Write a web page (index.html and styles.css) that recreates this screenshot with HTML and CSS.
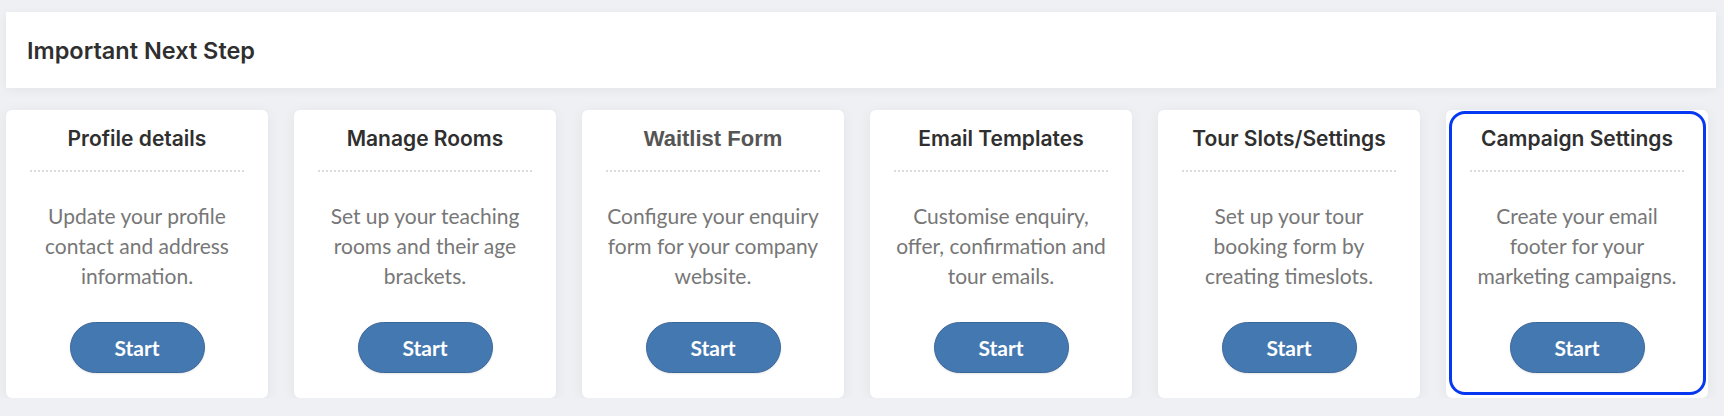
FILE: index.html
```html
<!DOCTYPE html>
<html lang="en">
<head>
  <meta charset="UTF-8" />
  <title>Important Next Step</title>
  <link rel="stylesheet" href="styles.css">
</head>
<body>
  <div class="page">
    <div class="next-step-header">
      <h2>Important Next Step</h2>
    </div>

    <div class="step-row">
      <div class="step-card">
        <h3 class="step-title">Profile details</h3>
        <p class="step-text">Update your profile contact and address information.</p>
        <button class="start-btn">Start</button>
      </div>

      <div class="step-card">
        <h3 class="step-title">Manage Rooms</h3>
        <p class="step-text">Set up your teaching rooms and their age brackets.</p>
        <button class="start-btn">Start</button>
      </div>

      <div class="step-card">
        <h3 class="step-title alt">Waitlist Form</h3>
        <p class="step-text">Configure your enquiry form for your company website.</p>
        <button class="start-btn">Start</button>
      </div>

      <div class="step-card">
        <h3 class="step-title">Email Templates</h3>
        <p class="step-text">Customise enquiry, offer, confirmation and tour emails.</p>
        <button class="start-btn">Start</button>
      </div>

      <div class="step-card">
        <h3 class="step-title">Tour Slots/Settings</h3>
        <p class="step-text">Set up your tour booking form by creating timeslots.</p>
        <button class="start-btn">Start</button>
      </div>

      <div class="step-card selected">
        <h3 class="step-title">Campaign Settings</h3>
        <p class="step-text">Create your email footer for your marketing campaigns.</p>
        <button class="start-btn">Start</button>
      </div>
    </div>
  </div>
</body>
</html>
```

FILE: styles.css
```css
body {
  margin: 0;
  padding: 0;
  background-color: #eef0f3;
  font-family: Lato, "Noto Sans", sans-serif;
}

.page {
  padding: 12px 0 0 0;
}

.next-step-header {
  margin-left: 6px;
  width: 1710px;
  height: 76px;
  box-sizing: border-box;
  background-color: #fff;
  box-shadow: 0 2px 10px rgba(0, 0, 0, 0.05);
  display: flex;
  align-items: center;
  padding-left: 21px;
}

.next-step-header h2 {
  margin: 0;
  font-family: Inter, "Noto Sans", sans-serif;
  font-weight: 600;
  font-size: 23.5px;
  color: #2f2f2f;
}

.step-row {
  display: flex;
  gap: 26px;
  margin-top: 22px;
  padding-left: 6px;
}

.step-card {
  position: relative;
  width: 262px;
  height: 288px;
  box-sizing: border-box;
  background-color: #fff;
  border-radius: 6px;
  box-shadow: 0 2px 14px rgba(0, 0, 0, 0.06);
  padding: 16px 24px 25px;
  display: flex;
  flex-direction: column;
  align-items: center;
  text-align: center;
}

.step-card.selected::after {
  content: "";
  position: absolute;
  top: 1px;
  left: 3px;
  right: 2px;
  bottom: 3px;
  border: 3px solid #0638f2;
  border-radius: 16px;
  pointer-events: none;
}

.step-title {
  margin: 0;
  width: 100%;
  font-family: Inter, "Noto Sans", sans-serif;
  font-weight: 600;
  font-size: 21px;
  line-height: 26px;
  color: #2f2f2f;
  padding-bottom: 18px;
  border-bottom: 2px dotted #dcdcdc;
}

.step-title.alt {
  font-family: "Liberation Sans", Arial, sans-serif;
  font-weight: 700;
  font-size: 22px;
  color: #555;
}

.step-text {
  margin: 29px 0 0 0;
  max-width: 216px;
  font-size: 21px;
  line-height: 30px;
  color: #777;
}

.start-btn {
  margin-top: auto;
  width: 135px;
  height: 51px;
  border-radius: 26px;
  border: 1px solid #3a6799;
  background-color: #4478b0;
  color: #fff;
  font-family: Lato, "Noto Sans", sans-serif;
  font-weight: 700;
  font-size: 21px;
  box-shadow: 0 1px 2px rgba(0, 0, 0, 0.1);
  cursor: pointer;
}
```
